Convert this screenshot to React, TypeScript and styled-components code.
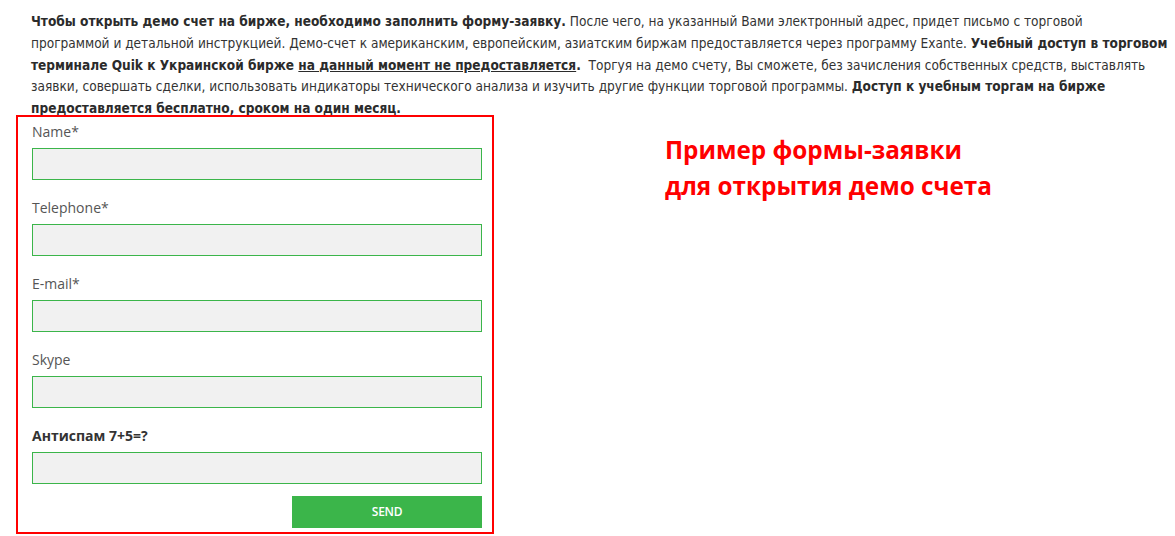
import styled, { createGlobalStyle } from 'styled-components';

const GlobalStyle = createGlobalStyle`
  html, body {
    margin: 0;
    padding: 0;
    background: #fff;
  }
  body {
    font-family: "Open Sans", "Liberation Sans", sans-serif;
  }
`;

const Page = styled.div`
  padding: 11px 0 0 31px;
  width: 1175px;
  height: 536px;
  box-sizing: border-box;
  overflow: hidden;
`;

const Intro = styled.p`
  margin: 0;
  font-family: "DejaVu Sans Condensed", "DejaVu Sans", sans-serif;
  font-size: 13.55px;
  line-height: 21.75px;
  color: #333;
  white-space: nowrap;

  strong {
    font-weight: 700;
    color: #2b2b2b;
  }

  u {
    text-decoration: underline;
  }
`;

const Row = styled.div`
  display: flex;
  align-items: flex-start;
  margin-top: -5px;
`;

const FormBox = styled.form`
  margin-left: -15px;
  width: 478px;
  height: 419px;
  box-sizing: border-box;
  border: 2px solid #f00;
  padding: 6px 10px 0 14px;
  display: flex;
  flex-direction: column;
`;

const Field = styled.div`
  display: flex;
  flex-direction: column;
  margin-bottom: 19px;
`;

const Label = styled.label<{ $bold?: boolean }>`
  font-size: 14px;
  line-height: 18px;
  color: ${(p) => (p.$bold ? '#333' : '#555')};
  font-weight: ${(p) => (p.$bold ? 700 : 400)};
  margin-bottom: 7px;
`;

const Input = styled.input`
  height: 32px;
  box-sizing: border-box;
  border: 1px solid #3bb54a;
  background: #f1f1f1;
  outline: none;
  padding: 0 8px;
  font: inherit;
`;

const SendButton = styled.button`
  align-self: flex-end;
  margin-top: -7px;
  width: 190px;
  height: 32px;
  border: none;
  background: #3bb54a;
  color: #fff;
  font-family: "Open Sans", sans-serif;
  font-size: 12px;
  font-weight: 600;
  letter-spacing: -0.3px;
  cursor: pointer;
`;

const Caption = styled.div`
  margin: 17px 0 0 171px;
  color: #ff0000;
  font-family: "Open Sans", sans-serif;
  font-weight: 700;
  font-size: 24.3px;
  line-height: 36px;
`;

const fields = [
  { label: 'Name*' },
  { label: 'Telephone*' },
  { label: 'E-mail*' },
  { label: 'Skype' },
  { label: 'Антиспам 7+5=?', bold: true },
];

export default function App() {
  return (
    <>
      <GlobalStyle />
      <Page>
        <Intro>
          <strong>Чтобы открыть демо счет на бирже, необходимо заполнить форму-заявку.</strong> После чего, на указанный Вами электронный адрес, придет письмо с торговой
          <br />
          программой и детальной инструкцией. Демо-счет к американским, европейским, азиатским биржам предоставляется через программу Exante. <strong>Учебный доступ в торговом</strong>
          <br />
          <strong>
            терминале Quik к Украинской бирже <u>на данный момент не предоставляется</u>.
          </strong>{'\u00a0'} Торгуя на демо счету, Вы сможете, без зачисления собственных средств, выставлять
          <br />
          заявки, совершать сделки, использовать индикаторы технического анализа и изучить другие функции торговой программы. <strong>Доступ к учебным торгам на бирже</strong>
          <br />
          <strong>предоставляется бесплатно, сроком на один месяц.</strong>
        </Intro>
        <Row>
          <FormBox onSubmit={(e) => e.preventDefault()}>
            {fields.map((f) => (
              <Field key={f.label}>
                <Label $bold={f.bold}>{f.label}</Label>
                <Input type="text" />
              </Field>
            ))}
            <SendButton type="submit">SEND</SendButton>
          </FormBox>
          <Caption>
            Пример формы-заявки
            <br />
            для открытия демо счета
          </Caption>
        </Row>
      </Page>
    </>
  );
}
